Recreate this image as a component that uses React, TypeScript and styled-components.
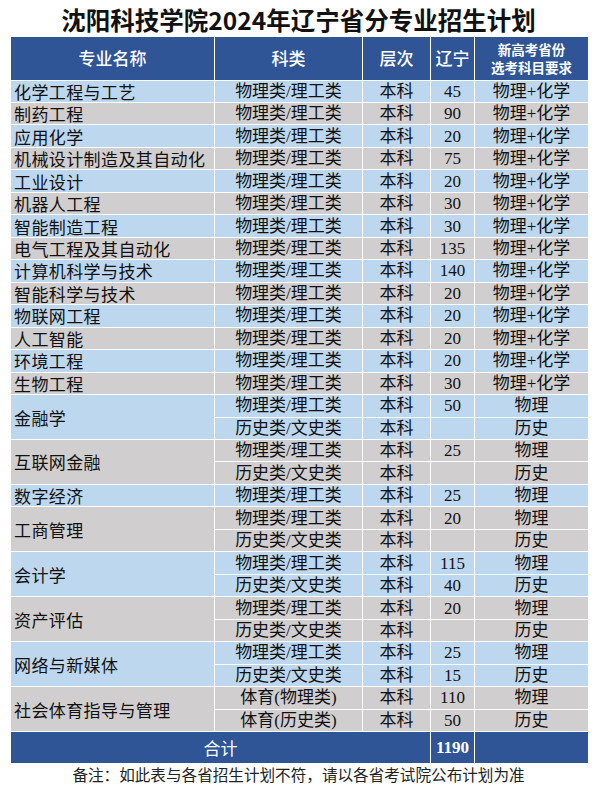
import styled, { createGlobalStyle } from "styled-components";

const GlobalStyle = createGlobalStyle`
  body {
    margin: 0;
    background: #fff;
    font-family: "Noto Sans CJK SC", "Noto Sans", sans-serif;
  }
`;

type Row = [string, string, string, string];

interface Group {
  name: string;
  rows: Row[];
}

const PL: [string, string] = ["物理类/理工类", "本科"];
const HW: [string, string] = ["历史类/文史类", "本科"];

const groups: Group[] = [
  { name: "化学工程与工艺", rows: [[...PL, "45", "物理+化学"]] },
  { name: "制药工程", rows: [[...PL, "90", "物理+化学"]] },
  { name: "应用化学", rows: [[...PL, "20", "物理+化学"]] },
  { name: "机械设计制造及其自动化", rows: [[...PL, "75", "物理+化学"]] },
  { name: "工业设计", rows: [[...PL, "20", "物理+化学"]] },
  { name: "机器人工程", rows: [[...PL, "30", "物理+化学"]] },
  { name: "智能制造工程", rows: [[...PL, "30", "物理+化学"]] },
  { name: "电气工程及其自动化", rows: [[...PL, "135", "物理+化学"]] },
  { name: "计算机科学与技术", rows: [[...PL, "140", "物理+化学"]] },
  { name: "智能科学与技术", rows: [[...PL, "20", "物理+化学"]] },
  { name: "物联网工程", rows: [[...PL, "20", "物理+化学"]] },
  { name: "人工智能", rows: [[...PL, "20", "物理+化学"]] },
  { name: "环境工程", rows: [[...PL, "20", "物理+化学"]] },
  { name: "生物工程", rows: [[...PL, "30", "物理+化学"]] },
  { name: "金融学", rows: [[...PL, "50", "物理"], [...HW, "", "历史"]] },
  { name: "互联网金融", rows: [[...PL, "25", "物理"], [...HW, "", "历史"]] },
  { name: "数字经济", rows: [[...PL, "25", "物理"]] },
  { name: "工商管理", rows: [[...PL, "20", "物理"], [...HW, "", "历史"]] },
  { name: "会计学", rows: [[...PL, "115", "物理"], [...HW, "40", "历史"]] },
  { name: "资产评估", rows: [[...PL, "20", "物理"], [...HW, "", "历史"]] },
  { name: "网络与新媒体", rows: [[...PL, "25", "物理"], [...HW, "15", "历史"]] },
  {
    name: "社会体育指导与管理",
    rows: [
      ["体育(物理类)", "本科", "110", "物理"],
      ["体育(历史类)", "本科", "50", "历史"],
    ],
  },
];

const Page = styled.div`
  width: 597px;
`;

const Title = styled.h1`
  margin: 0;
  height: 37px;
  line-height: 40px;
  text-align: center;
  font-size: 24.5px;
  font-weight: 700;
  color: #111;
`;

const Table = styled.table`
  width: 578px;
  margin-left: 10px;
  border-collapse: collapse;
  table-layout: fixed;
`;

const HeadRow = styled.tr`
  height: 43px;
`;

const HeadCell = styled.th<{ small?: boolean }>`
  padding: 0;
  background: #2f5597;
  color: #fff;
  border: 1px solid #fff;
  border-top: none;
  font-size: ${({ small }) => (small ? "13.5px" : "17px")};
  line-height: ${({ small }) => (small ? "18px" : "20px")};
  font-weight: ${({ small }) => (small ? 700 : 500)};
  text-align: center;
  vertical-align: middle;
`;

const BodyRow = styled.tr`
  height: 22.48px;
`;

const Cell = styled.td<{ tone: "blue" | "gray"; left?: boolean; num?: boolean }>`
  padding: 0 0 0 ${({ left }) => (left ? "3px" : "0")};
  background: ${({ tone }) => (tone === "blue" ? "#bdd7ee" : "#d0cece")};
  color: #111;
  border: 1px solid #fff;
  font-family: ${({ num }) =>
    num
      ? '"Liberation Serif", serif'
      : '"Liberation Serif", "Noto Sans CJK SC", serif'};
  font-size: 17px;
  line-height: 19px;
  text-align: ${({ left }) => (left ? "left" : "center")};
  vertical-align: middle;
  white-space: nowrap;
`;

const NameText = styled.div`
  font-family: "Noto Sans CJK SC", sans-serif;
  line-height: 19px;
  letter-spacing: 0.4px;
`;

const TotalRow = styled.tr`
  height: 32px;
`;

const TotalCell = styled.td<{ bold?: boolean }>`
  padding: 0;
  background: #2f5597;
  color: #fff;
  border: 1px solid #fff;
  text-align: center;
  vertical-align: middle;
  font-family: ${({ bold }) =>
    bold ? '"Liberation Serif", serif' : '"Noto Sans CJK SC", sans-serif'};
  font-weight: ${({ bold }) => (bold ? 700 : 400)};
  font-size: 17px;
  line-height: 20px;
`;

const Note = styled.p`
  margin: 0;
  text-align: center;
  font-size: 15.6px;
  line-height: 20px;
  color: #222;
`;

export default function App() {
  return (
    <Page>
      <GlobalStyle />
      <Title>沈阳科技学院2024年辽宁省分专业招生计划</Title>
      <Table>
        <colgroup>
          <col style={{ width: 204 }} />
          <col style={{ width: 148 }} />
          <col style={{ width: 68 }} />
          <col style={{ width: 44 }} />
          <col style={{ width: 114 }} />
        </colgroup>
        <thead>
          <HeadRow>
            <HeadCell>专业名称</HeadCell>
            <HeadCell>科类</HeadCell>
            <HeadCell>层次</HeadCell>
            <HeadCell>辽宁</HeadCell>
            <HeadCell small>
              新高考省份
              <br />
              选考科目要求
            </HeadCell>
          </HeadRow>
        </thead>
        <tbody>
          {groups.map((g, gi) => {
            const tone = gi % 2 === 0 ? "blue" : "gray";
            return g.rows.map((r, ri) => (
              <BodyRow key={`${gi}-${ri}`}>
                {ri === 0 && (
                  <Cell tone={tone} left rowSpan={g.rows.length}>
                    <NameText>{g.name}</NameText>
                  </Cell>
                )}
                <Cell tone={tone}>{r[0]}</Cell>
                <Cell tone={tone}>{r[1]}</Cell>
                <Cell tone={tone} num>
                  {r[2]}
                </Cell>
                <Cell tone={tone}>{r[3]}</Cell>
              </BodyRow>
            ));
          })}
          <TotalRow>
            <TotalCell colSpan={3}>合计</TotalCell>
            <TotalCell bold>1190</TotalCell>
            <TotalCell />
          </TotalRow>
        </tbody>
      </Table>
      <Note>备注：如此表与各省招生计划不符，请以各省考试院公布计划为准</Note>
    </Page>
  );
}
